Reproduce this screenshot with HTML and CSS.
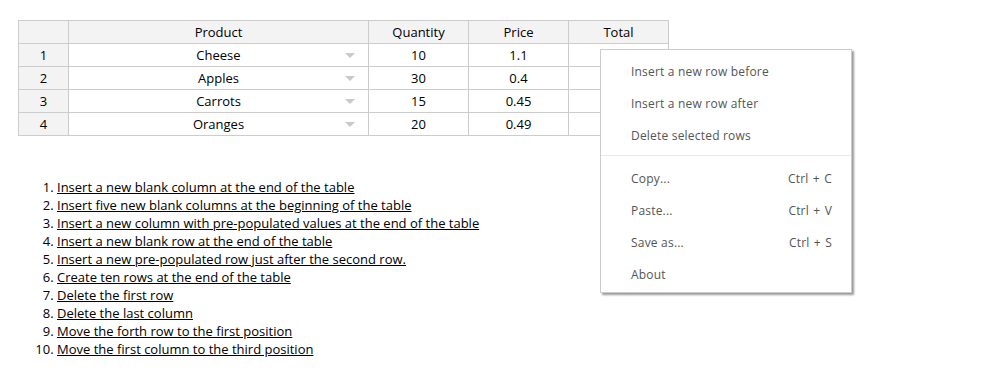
FILE: index.html
```html
<!DOCTYPE html>
<html>
<head>
	<meta charset="utf-8">
	<title>Spreadsheet</title>
	<link rel="stylesheet" href="styles.css">
</head>
<body>
	<div class="page">
		<div class="hoja">
			<table class="tabla">
				<thead>
					<tr>
						<td class="indice"></td>
						<td class="col_producto">Product</td>
						<td class="col_num">Quantity</td>
						<td class="col_num">Price</td>
						<td class="col_num">Total</td>
					</tr>
				</thead>
				<tbody>
					<tr>
						<td class="indice">1</td>
						<td class="desplegable">Cheese</td>
						<td>10</td>
						<td>1.1</td>
						<td></td>
					</tr>
					<tr>
						<td class="indice">2</td>
						<td class="desplegable">Apples</td>
						<td>30</td>
						<td>0.4</td>
						<td></td>
					</tr>
					<tr>
						<td class="indice">3</td>
						<td class="desplegable">Carrots</td>
						<td>15</td>
						<td>0.45</td>
						<td></td>
					</tr>
					<tr>
						<td class="indice">4</td>
						<td class="desplegable">Oranges</td>
						<td>20</td>
						<td>0.49</td>
						<td></td>
					</tr>
				</tbody>
			</table>

			<div class="menu_contextual">
				<div class="opcion">Insert a new row before</div>
				<div class="opcion">Insert a new row after</div>
				<div class="opcion">Delete selected rows</div>
				<hr class="separador">
				<div class="opcion"><span>Copy...</span><span class="atajo">Ctrl + C</span></div>
				<div class="opcion"><span>Paste...</span><span class="atajo">Ctrl + V</span></div>
				<div class="opcion"><span>Save as...</span><span class="atajo">Ctrl + S</span></div>
				<div class="opcion">About</div>
			</div>
		</div>

		<ol class="acciones">
			<li><a href="#">Insert a new blank column at the end of the table</a></li>
			<li><a href="#">Insert five new blank columns at the beginning of the table</a></li>
			<li><a href="#">Insert a new column with pre-populated values at the end of the table</a></li>
			<li><a href="#">Insert a new blank row at the end of the table</a></li>
			<li><a href="#">Insert a new pre-populated row just after the second row.</a></li>
			<li><a href="#">Create ten rows at the end of the table</a></li>
			<li><a href="#">Delete the first row</a></li>
			<li><a href="#">Delete the last column</a></li>
			<li><a href="#">Move the forth row to the first position</a></li>
			<li><a href="#">Move the first column to the third position</a></li>
		</ol>
	</div>
</body>
</html>
```

FILE: styles.css
```css
body {
	margin: 0;
	font-family: "Open Sans", sans-serif;
	font-size: 13px;
	color: #000;
	background: #fff;
}

.page {
	padding: 20px 18px 0;
}

.hoja {
	position: relative;
}

.tabla {
	border-collapse: collapse;
	table-layout: fixed;
	font-size: 13px;
}

.tabla td {
	border: 1px solid #ccc;
	height: 22px;
	padding: 0 4px;
	text-align: center;
	line-height: 21px;
	white-space: nowrap;
}

.tabla thead td {
	background: #f3f3f3;
	height: 22px;
	line-height: 22px;
}

.tabla .indice {
	width: 41px;
	background: #f3f3f3;
}

.col_producto {
	width: 291px;
}

.col_num {
	width: 91px;
}

.desplegable {
	position: relative;
}

/* flechita del dropdown */
.desplegable::after {
	content: "";
	position: absolute;
	right: 13px;
	top: 9px;
	border-left: 5px solid transparent;
	border-right: 5px solid transparent;
	border-top: 5px solid #c9c9c9;
}

.menu_contextual {
	position: absolute;
	left: 582px;
	top: 29px;
	width: 250px;
	padding: 5px 0 2px;
	background: #fff;
	border: 1px solid #ccc;
	box-shadow: 2px 2px 2px #999;
	color: #555;
	font-size: 12px;
	letter-spacing: 0.2px;
	z-index: 10;
}

.opcion {
	display: flex;
	justify-content: space-between;
	align-items: center;
	height: 32px;
	padding: 0 19px 0 30px;
}

.atajo {
	word-spacing: 1px;
}

.separador {
	border: 0;
	border-top: 1px solid #e9e9e9;
	margin: 4px 0 6px;
}

.acciones {
	margin: 42px 0 0;
	padding-left: 39px;
	line-height: 18px;
}

.acciones a {
	color: #000;
	text-decoration: underline;
}
```
